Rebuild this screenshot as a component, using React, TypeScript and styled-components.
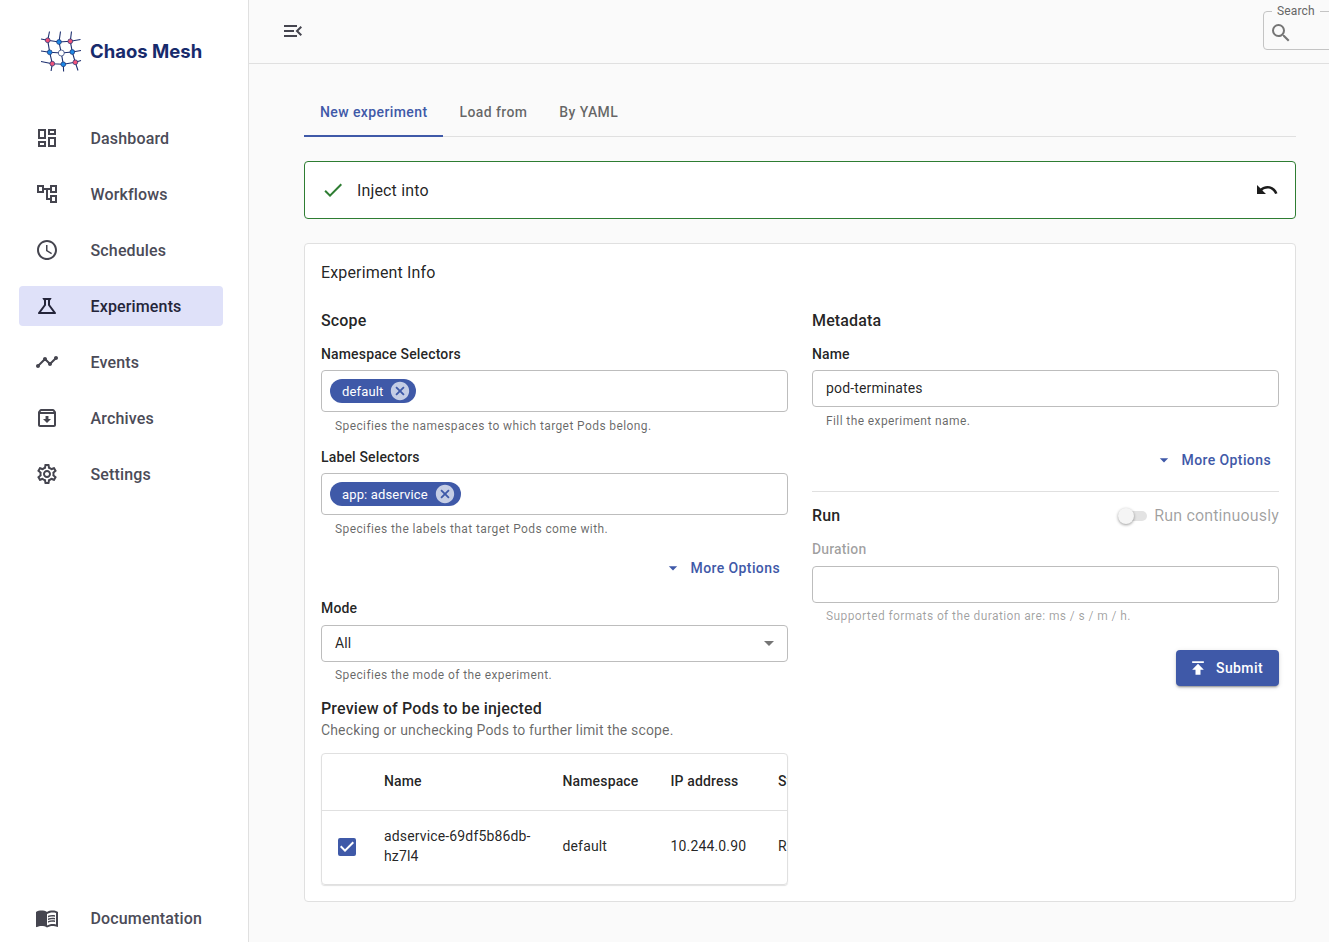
import React from 'react';
import styled, { createGlobalStyle } from 'styled-components';
import {
  MdArrowDropDown,
  MdCancel,
  MdCheck,
  MdCheckBox,
  MdMenuBook,
  MdMenuOpen,
  MdOutlineAccountTree,
  MdOutlineArchive,
  MdOutlineDashboard,
  MdOutlineScience,
  MdOutlineSettings,
  MdPublish,
  MdSchedule,
  MdSearch,
  MdTimeline,
  MdUndo,
} from 'react-icons/md';

const primary = '#3f59a8';

const GlobalStyle = createGlobalStyle`
  html, body {
    margin: 0;
    height: 100%;
    overflow: hidden;
  }
  body {
    font-family: Roboto, "Noto Sans", sans-serif;
    letter-spacing: 0.15px;
    background: #fafafa;
    color: rgba(0, 0, 0, 0.87);
  }
  * {
    box-sizing: border-box;
  }
`;

const Shell = styled.div`
  display: flex;
  width: 1329px;
  height: 942px;
  overflow: hidden;
`;

const Sidebar = styled.aside`
  flex: 0 0 249px;
  display: flex;
  flex-direction: column;
  padding: 0 25px 4px 19px;
  background: #fff;
  border-right: 1px solid #e0e0e0;
`;

const Brand = styled.div`
  display: flex;
  align-items: center;
  gap: 8px;
  height: 102px;
  margin-bottom: 16px;
  padding-left: 21px;
`;

const BrandName = styled.span`
  font-family: Inter, Roboto, sans-serif;
  font-size: 18.5px;
  font-weight: 700;
  letter-spacing: 0;
  color: #172b6c;
`;

const Nav = styled.nav`
  display: flex;
  flex-direction: column;
  gap: 16px;
`;

const NavItem = styled.a<{ $active?: boolean }>`
  display: flex;
  align-items: center;
  height: 40px;
  padding-left: 16px;
  border-radius: 4px;
  font-size: 16px;
  font-weight: 500;
  line-height: 24px;
  color: ${props => (props.$active ? '#24253a' : '#4b4b57')};
  background: ${props => (props.$active ? '#dfe1f9' : 'transparent')};

  svg {
    flex: 0 0 24px;
    margin-right: 31.5px;
    color: ${props => (props.$active ? '#24253a' : '#45454f')};
  }
`;

const NavLabel = styled.span`
  padding-top: 2px;
`;

const DocsItem = styled(NavItem)`
  margin-top: auto;
`;

const Main = styled.main`
  flex: 1;
  min-width: 0;
  display: flex;
  flex-direction: column;
`;

const TopBar = styled.header`
  flex: 0 0 64px;
  display: flex;
  align-items: center;
  padding: 0 0 2px 32px;
  border-bottom: 1px solid #e0e0e0;
  overflow: hidden;
  color: #45454f;

  > svg {
    flex: 0 0 24px;
  }
`;

const SearchBox = styled.fieldset`
  flex: 0 0 220px;
  display: flex;
  align-items: center;
  align-self: flex-start;
  height: 45px;
  margin: 5px 0 0 958px;
  padding: 0 0 0 5px;
  min-inline-size: 0;
  border: 1px solid #c4c4c4;
  border-radius: 4px;
  color: #757575;

  legend {
    margin-left: 3px;
    padding: 0 5px;
    font-size: 12px;
    line-height: 12px;
    color: #666;
  }
`;

const Content = styled.div`
  flex: 1;
  padding: 24px 33px 0 55px;
`;

const Tabs = styled.div`
  display: flex;
  height: 49px;
  border-bottom: 1px solid #e0e0e0;
`;

const Tab = styled.div<{ $active?: boolean }>`
  height: 49px;
  padding: 0 16px;
  font-size: 14px;
  font-weight: 500;
  line-height: 48px;
  letter-spacing: 0.02857em;
  color: ${props => (props.$active ? primary : 'rgba(0, 0, 0, 0.6)')};
  border-bottom: 2px solid ${props => (props.$active ? primary : 'transparent')};
`;

const StepBar = styled.div`
  display: flex;
  align-items: center;
  height: 58px;
  margin-top: 24px;
  padding: 0 16px;
  background: #fff;
  border: 1px solid #2e7d32;
  border-radius: 4px;
  font-size: 16px;
  color: rgba(0, 0, 0, 0.87);
`;

const StepLabel = styled.span`
  flex: 1;
  margin-left: 12px;
`;

const Card = styled.section`
  margin-top: 24px;
  padding: 16px;
  background: #fff;
  border: 1px solid #e0e0e0;
  border-radius: 4px;
`;

const CardTitle = styled.div`
  height: 24px;
  padding-top: 1px;
  font-size: 16px;
  line-height: 24px;
`;

const Columns = styled.div`
  display: grid;
  grid-template-columns: 467px 467px;
  gap: 24px;
  margin-top: 24px;
`;

const Column = styled.div`
  display: flex;
  flex-direction: column;
  min-width: 0;
`;

const Heading = styled.div`
  height: 24px;
  padding-top: 1px;
  font-size: 16px;
  font-weight: 500;
  line-height: 24px;
`;

const FieldLabel = styled.div<{ $disabled?: boolean }>`
  margin-top: 12px;
  font-size: 14px;
  font-weight: 500;
  line-height: 20px;
  color: ${props => (props.$disabled ? 'rgba(0, 0, 0, 0.38)' : 'rgba(0, 0, 0, 0.87)')};
`;

const ChipBox = styled.div`
  display: flex;
  height: 42px;
  margin-top: 6px;
  padding: 8px;
  border: 1px solid #bdbdbd;
  border-radius: 4px;
`;

const Chip = styled.span`
  display: inline-flex;
  align-items: center;
  height: 24px;
  padding: 0 5px 0 12px;
  border-radius: 12px;
  background: ${primary};
  color: #fff;
  font-size: 13px;

  svg {
    margin-left: 6px;
    color: rgba(255, 255, 255, 0.7);
  }
`;

const TextBox = styled.div<{ $gap?: number }>`
  display: flex;
  align-items: center;
  justify-content: space-between;
  height: 37px;
  margin-top: ${props => props.$gap ?? 6}px;
  padding: 0 6px 2px 13px;
  border: 1px solid #bdbdbd;
  border-radius: 4px;
  font-size: 14px;
  color: rgba(0, 0, 0, 0.87);

  svg {
    color: #757575;
  }
`;

const Helper = styled.div<{ $disabled?: boolean }>`
  margin-top: 3px;
  padding-left: 14px;
  font-size: 12px;
  line-height: 20px;
  letter-spacing: 0.03333em;
  color: ${props => (props.$disabled ? 'rgba(0, 0, 0, 0.38)' : 'rgba(0, 0, 0, 0.6)')};
`;

const TightHelper = styled(Helper)`
  height: 19px;
  margin-top: 4px;
`;

const MoreOptions = styled.div<{ $top: number }>`
  display: flex;
  align-items: center;
  justify-content: flex-end;
  height: 36px;
  margin-top: ${props => props.$top}px;
  padding-right: 8px;
  font-size: 14px;
  font-weight: 500;
  letter-spacing: 0.02857em;
  color: ${primary};

  svg {
    margin-right: 8px;
  }
`;

const PreviewTitle = styled(Heading)`
  margin-top: 11px;
`;

const PreviewHint = styled.div`
  font-size: 14px;
  line-height: 20px;
  color: rgba(0, 0, 0, 0.6);
`;

const TableWrap = styled.div`
  height: 132px;
  margin-top: 13px;
  border: 1px solid #e0e0e0;
  border-radius: 4px;
  box-shadow: 0 1px 1px rgba(0, 0, 0, 0.12);
  overflow: hidden;
`;

const Table = styled.table`
  width: 600px;
  table-layout: fixed;
  border-collapse: collapse;
  font-size: 14px;
  line-height: 20px;
`;

const HeadCell = styled.th<{ $width: number }>`
  width: ${props => props.$width}px;
  height: 56px;
  padding: 0 16px 2px;
  border-bottom: 1px solid #e0e0e0;
  text-align: left;
  font-weight: 500;
`;

const Cell = styled.td`
  height: 73px;
  padding: 0 16px 2px;
`;

const NameCell = styled(Cell)`
  padding-right: 12px;
`;

const CheckCell = styled.td`
  height: 73px;
  padding: 6px 0 0 13px;
  color: ${primary};
`;

const Divider = styled.hr`
  width: 100%;
  margin: 13px 0 0;
  border: 0;
  border-top: 1px solid #e0e0e0;
`;

const RunRow = styled.div`
  display: flex;
  align-items: center;
  justify-content: space-between;
  height: 24px;
  margin-top: 11px;
`;

const ToggleLabel = styled.div`
  display: flex;
  align-items: center;
  gap: 7px;
  font-size: 16px;
  color: rgba(0, 0, 0, 0.38);
`;

const Toggle = styled.span`
  position: relative;
  display: block;
  width: 29px;
  height: 10px;
  margin-top: 2px;
  border-radius: 5px;
  background: #e3e3e3;

  &::after {
    content: '';
    position: absolute;
    top: -3px;
    left: 0;
    width: 16px;
    height: 16px;
    border-radius: 50%;
    background: #f5f5f5;
    box-shadow: 0 1px 3px rgba(0, 0, 0, 0.4);
  }
`;

const Actions = styled.div`
  display: flex;
  justify-content: flex-end;
  margin-top: 24px;
`;

const SubmitButton = styled.button`
  display: flex;
  align-items: center;
  gap: 8px;
  width: 103px;
  height: 36px;
  padding: 0 0 0 12px;
  border: 0;
  border-radius: 4px;
  background: ${primary};
  color: #fff;
  font-family: inherit;
  font-size: 14px;
  font-weight: 500;
  letter-spacing: 0.02857em;
  white-space: nowrap;
  box-shadow: 0 3px 1px -2px rgba(0, 0, 0, 0.2), 0 2px 2px 0 rgba(0, 0, 0, 0.14),
    0 1px 5px 0 rgba(0, 0, 0, 0.12);

  svg {
    flex: 0 0 20px;
  }
`;

const nodes = [
  { x: 7.7, y: 10.3, fill: '#f0527a' },
  { x: 19, y: 12, fill: '#1e88e5' },
  { x: 30.3, y: 11.3, fill: '#f0527a' },
  { x: 9.7, y: 22.3, fill: '#1e88e5' },
  { x: 21.3, y: 23, fill: '#fff' },
  { x: 32.3, y: 22, fill: '#1e88e5' },
  { x: 12.3, y: 33.7, fill: '#f0527a' },
  { x: 23.3, y: 34.3, fill: '#1e88e5' },
  { x: 35.3, y: 32.3, fill: '#f0527a' },
];

const Logo = () => (
  <svg width="42" height="42" viewBox="0 0 42 42" fill="none" stroke="#1d2f6f" strokeWidth="1.1">
    <path d="M1 9l6.7 1.3L19 12l11.3-.7L40.5 9.5" />
    <path d="M1 21l8.7 1.3L21.3 23l11-1L41 20.5" />
    <path d="M1 31.5l11.3 2.2 11 .6 12-2L41 30.5" />
    <path d="M9.5 1.5L7.7 10.3l2 12 2.6 11.4-1.2 7.3" />
    <path d="M20.5 1.5L19 12l2.3 11 2 11.3.3 7.2" />
    <path d="M31.5 1.5l-1.2 9.8 2 10.7 3 10.3 2.7 8.2" />
    {nodes.map((n, i) => (
      <circle key={i} cx={n.x} cy={n.y} r={n.fill === '#fff' ? 3 : 2.4} fill={n.fill} strokeWidth="0.7" />
    ))}
  </svg>
);

const links = [
  { label: 'Dashboard', icon: MdOutlineDashboard },
  { label: 'Workflows', icon: MdOutlineAccountTree },
  { label: 'Schedules', icon: MdSchedule },
  { label: 'Experiments', icon: MdOutlineScience, active: true },
  { label: 'Events', icon: MdTimeline },
  { label: 'Archives', icon: MdOutlineArchive },
  { label: 'Settings', icon: MdOutlineSettings },
];

const App: React.FC = () => (
  <Shell>
    <GlobalStyle />
    <Sidebar>
      <Brand>
        <Logo />
        <BrandName>Chaos Mesh</BrandName>
      </Brand>
      <Nav>
        {links.map(({ label, icon: Icon, active }) => (
          <NavItem key={label} $active={active}>
            <Icon size={24} />
            <NavLabel>{label}</NavLabel>
          </NavItem>
        ))}
      </Nav>
      <DocsItem>
        <MdMenuBook size={24} />
        <NavLabel>Documentation</NavLabel>
      </DocsItem>
    </Sidebar>
    <Main>
      <TopBar>
        <MdMenuOpen size={24} />
        <SearchBox>
          <legend>Search</legend>
          <MdSearch size={24} />
        </SearchBox>
      </TopBar>
      <Content>
        <Tabs>
          <Tab $active>New experiment</Tab>
          <Tab>Load from</Tab>
          <Tab>By YAML</Tab>
        </Tabs>
        <StepBar>
          <MdCheck size={24} color="#2e7d32" />
          <StepLabel>Inject into</StepLabel>
          <MdUndo size={24} color="#1c1c1c" />
        </StepBar>
        <Card>
          <CardTitle>Experiment Info</CardTitle>
          <Columns>
            <Column>
              <Heading>Scope</Heading>
              <FieldLabel>Namespace Selectors</FieldLabel>
              <ChipBox>
                <Chip>
                  default
                  <MdCancel size={22} />
                </Chip>
              </ChipBox>
              <TightHelper>Specifies the namespaces to which target Pods belong.</TightHelper>
              <FieldLabel>Label Selectors</FieldLabel>
              <ChipBox>
                <Chip>
                  app: adservice
                  <MdCancel size={22} />
                </Chip>
              </ChipBox>
              <TightHelper>Specifies the labels that target Pods come with.</TightHelper>
              <MoreOptions $top={12}>
                <MdArrowDropDown size={20} />
                More Options
              </MoreOptions>
              <FieldLabel>Mode</FieldLabel>
              <TextBox $gap={7}>
                All
                <MdArrowDropDown size={24} />
              </TextBox>
              <Helper>Specifies the mode of the experiment.</Helper>
              <PreviewTitle>Preview of Pods to be injected</PreviewTitle>
              <PreviewHint>Checking or unchecking Pods to further limit the scope.</PreviewHint>
              <TableWrap>
                <Table>
                  <thead>
                    <tr>
                      <HeadCell $width={46} />
                      <HeadCell $width={178.5}>Name</HeadCell>
                      <HeadCell $width={108}>Namespace</HeadCell>
                      <HeadCell $width={107.5}>IP address</HeadCell>
                      <HeadCell $width={160}>Status</HeadCell>
                    </tr>
                  </thead>
                  <tbody>
                    <tr>
                      <CheckCell>
                        <MdCheckBox size={24} />
                      </CheckCell>
                      <NameCell>adservice-69df5b86db-hz7l4</NameCell>
                      <Cell>default</Cell>
                      <Cell>10.244.0.90</Cell>
                      <Cell>Running</Cell>
                    </tr>
                  </tbody>
                </Table>
              </TableWrap>
            </Column>
            <Column>
              <Heading>Metadata</Heading>
              <FieldLabel>Name</FieldLabel>
              <TextBox>pod-terminates</TextBox>
              <TightHelper>Fill the experiment name.</TightHelper>
              <MoreOptions $top={12}>
                <MdArrowDropDown size={20} />
                More Options
              </MoreOptions>
              <Divider />
              <RunRow>
                <Heading>Run</Heading>
                <ToggleLabel>
                  <Toggle />
                  Run continuously
                </ToggleLabel>
              </RunRow>
              <FieldLabel $disabled>Duration</FieldLabel>
              <TextBox $gap={7} />
              <Helper $disabled>Supported formats of the duration are: ms / s / m / h.</Helper>
              <Actions>
                <SubmitButton>
                  <MdPublish size={20} />
                  Submit
                </SubmitButton>
              </Actions>
            </Column>
          </Columns>
        </Card>
      </Content>
    </Main>
  </Shell>
);

export default App;
